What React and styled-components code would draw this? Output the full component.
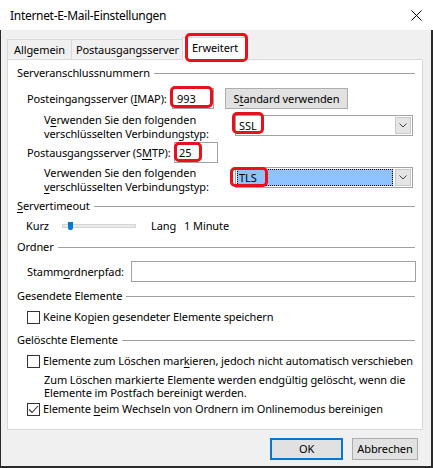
import React from 'react';
import styled, { createGlobalStyle } from 'styled-components';

const FONT = `"Segoe UI", "Noto Sans", "Open Sans", sans-serif`;

const GlobalStyle = createGlobalStyle`
  html, body { margin: 0; padding: 0; background: #f0f0f0; }
  body { font-family: ${FONT}; font-size: 11px; letter-spacing: -0.1px; color: #000; }
  * { box-sizing: border-box; }
`;

const Window = styled.div`
  position: relative;
  width: 433px;
  height: 468px;
  display: flex;
  flex-direction: column;
  background: #f0f0f0;
  overflow: hidden;
`;

const TitleBar = styled.div`
  height: 30px;
  flex: none;
  background: #fff;
  display: flex;
  align-items: center;
  justify-content: space-between;
  padding: 0 11px 0 10px;
`;

const Title = styled.div`
  font-size: 12px;
  letter-spacing: -0.3px;
  line-height: 14px;
  margin-top: 2px;
`;

const Body = styled.div`
  flex: 1;
  display: flex;
  flex-direction: column;
  border-left: 1px solid #2b2b2b;
  border-right: 2px solid #2b2b2b;
  border-bottom: 2px solid #2b2b2b;
  padding: 7px 8px 0 6px;
`;

const TabRow = styled.div`
  display: flex;
  align-items: flex-end;
  height: 22px;
  flex: none;
`;

const Tab = styled.div`
  position: relative;
  width: ${p => p.$w}px;
  height: ${p => (p.$active ? 23 : 20)}px;
  margin: ${p => (p.$active ? '0 -2px -1px -2px' : '0')};
  z-index: ${p => (p.$active ? 2 : 1)};
  display: flex;
  align-items: ${p => (p.$active ? 'flex-start' : 'center')};
  padding-top: ${p => (p.$active ? '3px' : '0')};
  justify-content: center;
  background: ${p => (p.$active ? '#fff' : '#f0f0f0')};
  border: 1px solid #d9d9d9;
  border-bottom: none;
  border-left: ${p => (p.$first || p.$active ? '1px solid #d9d9d9' : 'none')};
  white-space: nowrap;
  line-height: 14px;
`;

const Panel = styled.div`
  height: 371px;
  flex: none;
  background: #fff;
  border: 1px solid #d9d9d9;
  display: flex;
  flex-direction: column;
  padding: 0 7px 0 9px;
`;

const GroupHeader = styled.div`
  display: flex;
  align-items: center;
  height: 14px;
  line-height: 14px;
  margin-top: ${p => p.$mt}px;
  white-space: nowrap;
  &::after {
    content: '';
    flex: 1;
    height: 1px;
    background: #a0a0a0;
    margin-left: 4px;
  }
`;

const Row = styled.div`
  display: flex;
  align-items: ${p => p.$align || 'center'};
  margin-top: ${p => p.$mt}px;
  padding-left: ${p => p.$indent}px;
  height: ${p => p.$h}px;
  white-space: nowrap;
`;

const Label = styled.div`
  width: ${p => p.$w}px;
  flex: none;
  line-height: ${p => p.$lh || 14}px;
  white-space: nowrap;
`;

const Key = styled.span`
  text-decoration: underline;
  text-underline-offset: 2px;
  text-decoration-thickness: 1px;
`;

const TextBox = styled.div`
  width: ${p => p.$w}px;
  height: 21px;
  flex: none;
  background: #fff;
  border: 1px solid #a2a2a2;
  display: flex;
  align-items: center;
  padding-left: 4px;
  line-height: 14px;
`;

const Button = styled.div`
  width: ${p => p.$w}px;
  height: ${p => p.$h || 21}px;
  margin-left: ${p => p.$ml || 0}px;
  flex: none;
  display: flex;
  align-items: center;
  justify-content: center;
  background: #e1e1e1;
  border: ${p => (p.$default ? '2px solid #0078d7' : '1px solid #adadad')};
  line-height: 14px;
`;

const Combo = styled.div`
  width: 178px;
  height: 21px;
  margin-top: ${p => p.$mt}px;
  flex: none;
  background: #fff;
  border: 1px solid #a2a2a2;
  display: flex;
  align-items: stretch;
  padding: 1px;
`;

const ComboValue = styled.div`
  flex: 1;
  display: flex;
  align-items: center;
  padding-left: 2px;
  margin-right: 2px;
  line-height: 14px;
  background: ${p => (p.$selected ? '#8fc3ff' : 'transparent')};
  outline: ${p => (p.$selected ? '1px dotted #000' : 'none')};
  outline-offset: -1px;
`;

const ComboArrow = styled.div`
  width: 16px;
  flex: none;
  display: flex;
  align-items: center;
  justify-content: center;
  background: #e5e5e5;
  border: 1px solid #c8c8c8;
`;

const Slider = styled.div`
  position: relative;
  width: 74px;
  height: 14px;
  flex: none;
  display: flex;
  align-items: center;
`;

const Track = styled.div`
  width: 100%;
  height: 4px;
  background: #e7eaea;
  border: 1px solid #d6d6d6;
`;

const Thumb = styled.div`
  position: absolute;
  left: 6px;
  top: 3px;
  width: 5px;
  height: 8px;
  background: #0078d7;
  border-radius: 0 0 2px 2px;
`;

const Plain = styled.div`
  margin-left: ${p => p.$ml || 0}px;
  line-height: 14px;
`;

const CheckBox = styled.div`
  width: 13px;
  height: 13px;
  flex: none;
  border: 1px solid #333;
  background: #fff;
  margin-right: 3px;
  display: flex;
  align-items: center;
  justify-content: center;
`;

const Description = styled.div`
  margin-top: ${p => p.$mt}px;
  padding-left: ${p => p.$indent}px;
  line-height: 13px;
  white-space: nowrap;
`;

const Footer = styled.div`
  display: flex;
  justify-content: flex-end;
  gap: 9px;
  padding: 8px 5px 0 0;
`;

const Highlight = styled.div`
  position: absolute;
  left: ${p => p.$x}px;
  top: ${p => p.$y}px;
  width: ${p => p.$w}px;
  height: ${p => p.$h}px;
  border: 3px solid #e8111b;
  border-radius: 5px;
  z-index: 5;
  pointer-events: none;
`;

const Chevron = () => (
  <svg width="8" height="5" viewBox="0 0 8 5">
    <polyline points="0.5,0.5 4,4 7.5,0.5" fill="none" stroke="#444" strokeWidth="1" />
  </svg>
);

const Check = () => (
  <svg width="11" height="11" viewBox="0 0 11 11">
    <polyline points="1,5.5 4,8.5 10,2" fill="none" stroke="#333" strokeWidth="1.1" />
  </svg>
);

const CloseIcon = () => (
  <svg width="11" height="11" viewBox="0 0 11 11">
    <line x1="0.5" y1="0.5" x2="10.5" y2="10.5" stroke="#000" strokeWidth="1" />
    <line x1="10.5" y1="0.5" x2="0.5" y2="10.5" stroke="#000" strokeWidth="1" />
  </svg>
);

const highlights = [
  { x: 185, y: 33, w: 63, h: 29 },
  { x: 170, y: 86, w: 43, h: 22 },
  { x: 232, y: 112, w: 32, h: 22 },
  { x: 174, y: 142, w: 28, h: 20 },
  { x: 230, y: 167, w: 38, h: 20 },
];

export default function App() {
  return (
    <>
      <GlobalStyle />
      <Window>
        <TitleBar>
          <Title>Internet-E-Mail-Einstellungen</Title>
          <CloseIcon />
        </TitleBar>
        <Body>
          <TabRow>
            <Tab $w={65} $first>Allgemein</Tab>
            <Tab $w={112}>Postausgangsserver</Tab>
            <Tab $w={66} $active>Erweitert</Tab>
          </TabRow>
          <Panel>
            <GroupHeader $mt={6}>Serveranschlussnummern</GroupHeader>
            <Row $mt={8} $indent={10} $h={21}>
              <Label $w={145}>Posteingangsserver (<Key>I</Key>MAP):</Label>
              <TextBox $w={42}>993</TextBox>
              <Button $w={123} $ml={11}>S<Key>t</Key>andard verwenden</Button>
            </Row>
            <Row $mt={4} $indent={27} $h={28} $align="flex-start">
              <Label $w={191}>
                V<Key>e</Key>rwenden Sie den folgenden<br />verschlüsselten Verbindungstyp:
              </Label>
              <Combo $mt={2}>
                <ComboValue>SSL</ComboValue>
                <ComboArrow><Chevron /></ComboArrow>
              </Combo>
            </Row>
            <Row $mt={1} $indent={10} $h={21}>
              <Label $w={147}>Postausgangsserver (S<Key>M</Key>TP):</Label>
              <TextBox $w={44}>25</TextBox>
            </Row>
            <Row $mt={3} $indent={27} $h={28} $align="flex-start">
              <Label $w={191}>
                Verwenden Sie den folgenden<br /><Key>v</Key>erschlüsselten Verbindungstyp:
              </Label>
              <Combo $mt={1}>
                <ComboValue $selected>TLS</ComboValue>
                <ComboArrow><Chevron /></ComboArrow>
              </Combo>
            </Row>
            <GroupHeader $mt={5}><Key>S</Key>ervertimeout</GroupHeader>
            <Row $mt={6} $indent={9} $h={14}>
              <Label $w={36}>Kurz</Label>
              <Slider>
                <Track />
                <Thumb />
              </Slider>
              <Plain $ml={15}>Lang</Plain>
              <Plain $ml={8}>1 Minute</Plain>
            </Row>
            <GroupHeader $mt={7}>Ordner</GroupHeader>
            <Row $mt={7} $indent={10} $h={21}>
              <Label $w={104}>Stamm<Key>o</Key>rdnerpfad:</Label>
              <TextBox $w={285} />
            </Row>
            <GroupHeader $mt={7}>Gesendete Elemente</GroupHeader>
            <Row $mt={7} $indent={10} $h={14}>
              <CheckBox />
              <Plain>Keine Ko<Key>p</Key>ien gesendeter Elemente speichern</Plain>
            </Row>
            <GroupHeader $mt={9}>Gelöschte Elemente</GroupHeader>
            <Row $mt={7} $indent={10} $h={14}>
              <CheckBox />
              <Plain>Elemente zum Löschen mar<Key>k</Key>ieren, jedoch nicht automatisch verschieben</Plain>
            </Row>
            <Description $mt={5} $indent={27}>
              Zum Löschen markierte Elemente werden endgültig gelöscht, wenn die<br />
              Elemente im Postfach bereinigt werden.
            </Description>
            <Row $mt={3} $indent={10} $h={14}>
              <CheckBox><Check /></CheckBox>
              <Plain>Elemente <Key>b</Key>eim Wechseln von Ordnern im Onlinemodus bereinigen</Plain>
            </Row>
          </Panel>
          <Footer>
            <Button $w={73} $h={22} $default>OK</Button>
            <Button $w={66} $h={22}>Abbrechen</Button>
          </Footer>
        </Body>
        {highlights.map((h, i) => (
          <Highlight key={i} $x={h.x} $y={h.y} $w={h.w} $h={h.h} />
        ))}
      </Window>
    </>
  );
}
